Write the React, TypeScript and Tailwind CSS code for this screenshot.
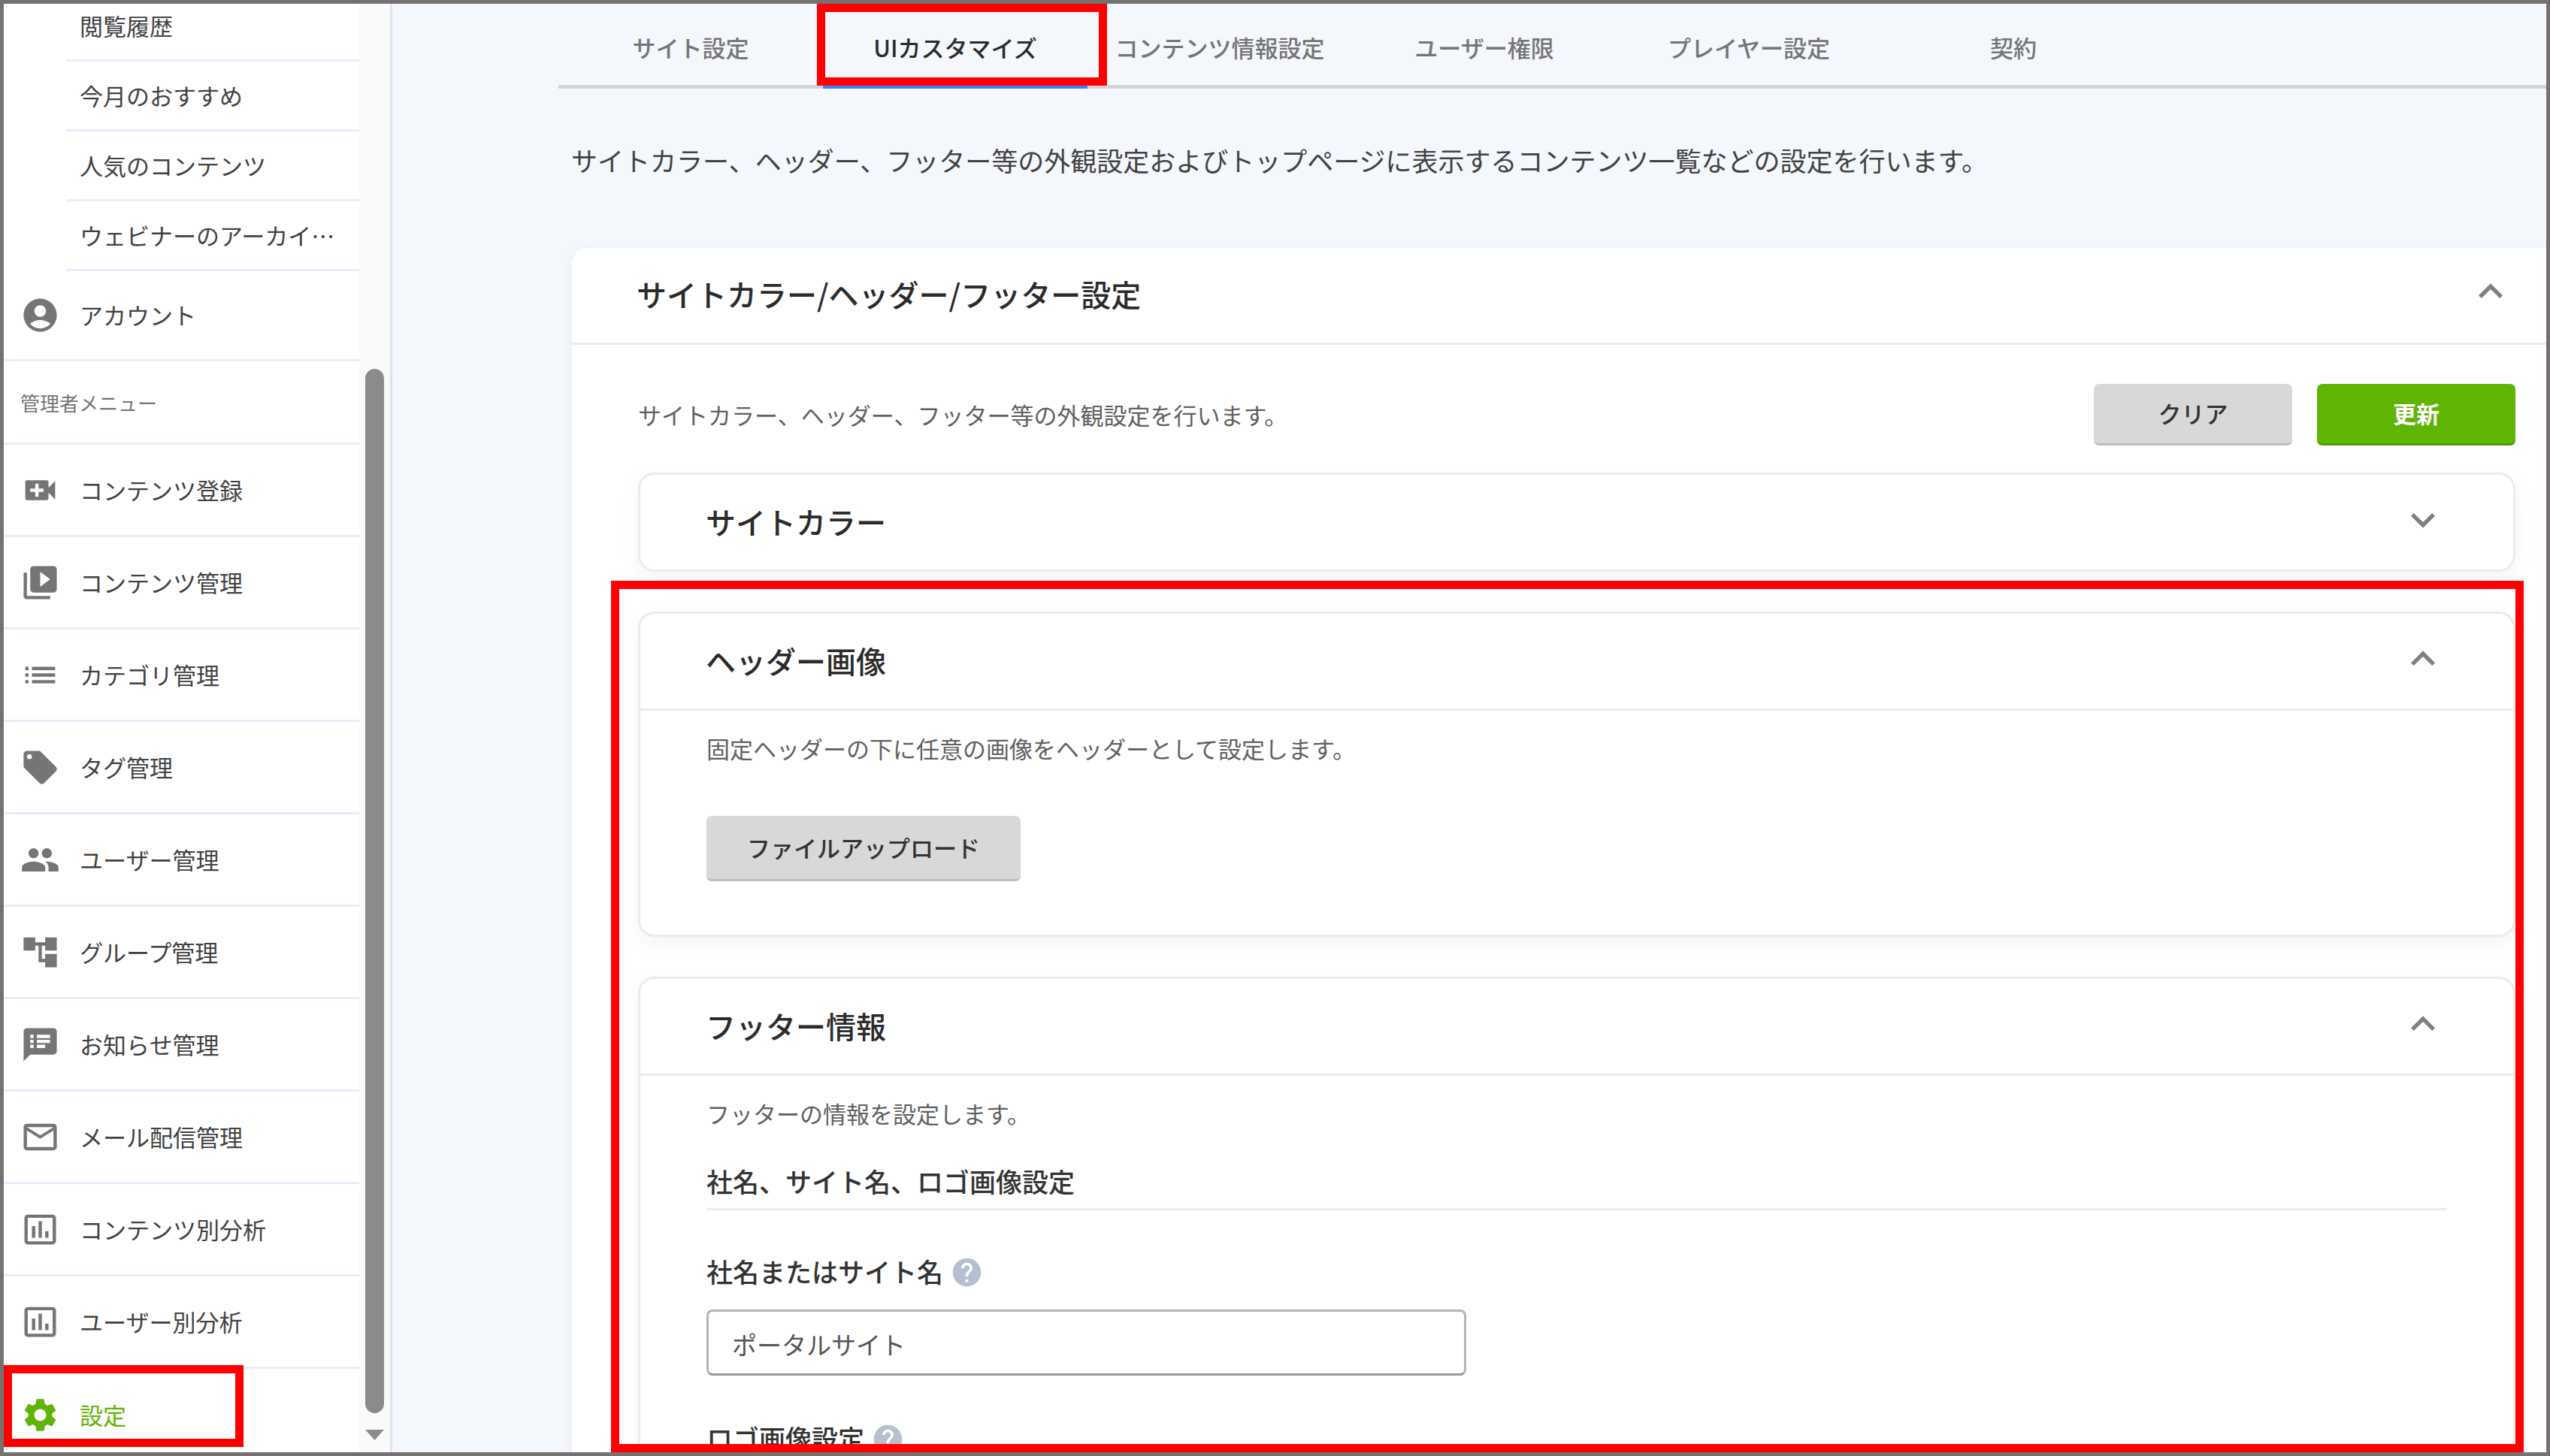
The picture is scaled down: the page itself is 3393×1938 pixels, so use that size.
import { useState } from "react"
import type { ReactNode } from "react"
import {
  MdAccountCircle,
  MdAccountTree,
  MdExpandLess,
  MdExpandMore,
  MdGroup,
  MdHelp,
  MdInsertChartOutlined,
  MdList,
  MdLocalOffer,
  MdMailOutline,
  MdSettings,
  MdSpeakerNotes,
  MdVideoCall,
  MdVideoLibrary,
} from "react-icons/md"

const subItems = ["閲覧履歴", "今月のおすすめ", "人気のコンテンツ", "ウェビナーのアーカイ…"]

const adminItems = [
  { icon: MdVideoCall, label: "コンテンツ登録" },
  { icon: MdVideoLibrary, label: "コンテンツ管理" },
  { icon: MdList, label: "カテゴリ管理" },
  { icon: MdLocalOffer, label: "タグ管理" },
  { icon: MdGroup, label: "ユーザー管理" },
  { icon: MdAccountTree, label: "グループ管理" },
  { icon: MdSpeakerNotes, label: "お知らせ管理" },
  { icon: MdMailOutline, label: "メール配信管理" },
  { icon: MdInsertChartOutlined, label: "コンテンツ別分析" },
  { icon: MdInsertChartOutlined, label: "ユーザー別分析" },
]

const tabs = ["サイト設定", "UIカスタマイズ", "コンテンツ情報設定", "ユーザー権限", "プレイヤー設定", "契約"]

function Sidebar() {
  return (
    <aside className="flex w-[517px] shrink-0 border-r-[3px] border-[#dbe4f2] bg-white">
      <nav className="min-w-0 flex-1 overflow-hidden text-[31px] text-[#424242]">
        <ul className="-mt-4 pl-[83px]">
          {subItems.map((label) => (
            <li key={label} className="border-b-[3px] border-[#e6eefb]">
              <a href="#" className="flex h-[90px] items-center pl-[18px] whitespace-nowrap">
                {label}
              </a>
            </li>
          ))}
        </ul>
        <a href="#" className="flex h-[120px] items-center gap-[26px] border-b-[3px] border-[#e6eefb] pl-[22px]">
          <MdAccountCircle className="size-[53px] text-[#757575]" />
          アカウント
        </a>
        <div className="flex h-[111px] items-center border-b-[3px] border-[#e6eefb] pl-[22px] text-[26px] text-[#757575]">
          管理者メニュー
        </div>
        <ul>
          {adminItems.map((item) => (
            <li key={item.label} className="border-b-[3px] border-[#e6eefb]">
              <a href="#" className="flex h-[120px] items-center gap-[26px] pl-[22px]">
                <item.icon className="size-[53px] text-[#757575]" />
                {item.label}
              </a>
            </li>
          ))}
          <li className="relative">
            <a href="#" className="flex h-[123px] items-center gap-[26px] pl-[22px] text-[#5fb404]">
              <MdSettings className="size-[53px]" />
              設定
            </a>
            <span className="pointer-events-none absolute -top-[5px] left-0 h-[109px] w-[319px] border-[11px] border-[#ff0000]" />
          </li>
        </ul>
      </nav>

      {/* Scrollbar */}
      <div className="flex w-[41px] flex-col items-center bg-[#fafafa] pt-[486px] pb-4">
        <div className="w-[25px] flex-1 rounded-full bg-[#8b8b8b]" />
        <svg viewBox="0 0 25 14" className="mt-[22px] h-[14px] w-[25px] fill-[#8b8b8b]">
          <path d="M0 0h25L12.5 14z" />
        </svg>
      </div>
    </aside>
  )
}

function Panel({ title, defaultOpen, children }: { title: string; defaultOpen?: boolean; children?: ReactNode }) {
  const [open, setOpen] = useState(Boolean(defaultOpen))
  const Chevron = open ? MdExpandLess : MdExpandMore

  return (
    <section className="mb-[53px] rounded-[22px] border-[3px] border-[#ebebeb] bg-white shadow-[0_8px_24px_rgba(90,120,120,0.08)]">
      <h3>
        <button
          type="button"
          aria-expanded={open}
          onClick={() => setOpen(!open)}
          className="flex h-[126px] w-full items-center justify-between pr-[88px] pb-[2px] pl-[87px] text-[40px] font-medium text-[#2b2b2b]"
        >
          {title}
          <Chevron className="mb-1 size-16 text-[#808080]" />
        </button>
      </h3>
      {open && children && <div className="border-t-[3px] border-[#ebebeb] px-[88px] pt-[30px] pb-[71px]">{children}</div>}
    </section>
  )
}

export default function App() {
  return (
    <div
      lang="ja"
      className="flex h-screen overflow-hidden border-[5px] border-[#767171] bg-[#f4f7fc] font-['Noto_Sans_CJK_JP',sans-serif] text-[#424242]"
    >
      <Sidebar />

      <main className="flex min-w-0 flex-1 flex-col">
        {/* Tabs */}
        <div role="tablist" className="ml-[221px] flex h-[113px] shrink-0 shadow-[inset_0_-5px_0_#d5d5d5]">
          {tabs.map((tab, index) => (
            <button
              key={tab}
              type="button"
              role="tab"
              aria-selected={index === 1}
              className={
                index === 1
                  ? "relative w-[352px] border-b-[5px] border-[#3880ff] pt-2 text-[31px] font-medium text-[#2b2b2b]"
                  : "w-[352px] border-b-[5px] border-transparent pt-2 text-[31px] font-medium text-[#757575]"
              }
            >
              {tab}
              {index === 1 && (
                <span className="pointer-events-none absolute top-0 -right-[26px] -bottom-px -left-2 border-[11px] border-[#ff0000]" />
              )}
            </button>
          ))}
        </div>

        <p className="mt-[69px] mb-[91px] ml-[238px] text-[35px] leading-[52px]">
          サイトカラー、ヘッダー、フッター等の外観設定およびトップページに表示するコンテンツ一覧などの設定を行います。
        </p>

        <section className="ml-[239px] flex min-h-0 flex-1 flex-col rounded-tl-[22px] bg-white shadow-[0_4px_16px_rgba(90,120,120,0.08)]">
          <h2 className="shrink-0">
            <button
              type="button"
              aria-expanded="true"
              className="flex h-[129px] w-full items-center justify-between border-b-[3px] border-[#ebebeb] pr-[42px] pb-1 pl-[86px] text-[40px] font-medium text-[#2b2b2b]"
            >
              サイトカラー/ヘッダー/フッター設定
              <MdExpandLess className="mb-[6px] size-16 text-[#808080]" />
            </button>
          </h2>

          <div className="flex min-h-0 flex-1 flex-col pt-[52px] pr-[41px] pl-[88px]">
            <div className="mb-[36px] flex items-center gap-[33px]">
              <p className="flex-1 text-[31px] text-[#616161]">サイトカラー、ヘッダー、フッター等の外観設定を行います。</p>
              <button
                type="button"
                className="h-[82px] w-[264px] rounded-[7px] border-b-[3px] border-[#bdbdbd] bg-[#d8d8d8] text-[31px] font-medium text-[#333333]"
              >
                クリア
              </button>
              <button
                type="button"
                className="h-[82px] w-[264px] rounded-[7px] border-b-[3px] border-[#529c03] bg-[#5fb404] text-[31px] font-bold text-white"
              >
                更新
              </button>
            </div>

            <Panel title="サイトカラー" />

            <div className="relative min-h-0 flex-1">
              <Panel title="ヘッダー画像" defaultOpen>
                <p className="text-[31px] leading-[40px] text-[#616161]">
                  固定ヘッダーの下に任意の画像をヘッダーとして設定します。
                </p>
                <button
                  type="button"
                  className="mt-[70px] block h-[87px] rounded-[7px] border-b-[3px] border-[#bdbdbd] bg-[#d8d8d8] px-[54px] text-[31px] font-medium text-[#333333]"
                >
                  ファイルアップロード
                </button>
              </Panel>

              <Panel title="フッター情報" defaultOpen>
                <p className="text-[31px] leading-[40px] text-[#616161]">フッターの情報を設定します。</p>
                <h4 className="mt-[46px] border-b-[3px] border-[#ebebeb] pb-3 text-[35px] leading-[48px] font-medium text-[#333333]">
                  社名、サイト名、ロゴ画像設定
                </h4>
                <div className="mt-[56px] flex items-center gap-[9px] text-[35px] leading-[48px] font-medium text-[#333333]">
                  <label htmlFor="site-name">社名またはサイト名</label>
                  <MdHelp className="mt-1 size-[45px] text-[#b4bfcf]" />
                </div>
                <input
                  id="site-name"
                  type="text"
                  defaultValue="ポータルサイト"
                  className="mt-[27px] block h-[88px] w-[1011px] rounded-[8px] border-[3px] border-[#b5b5b5] border-b-[#999999] bg-white px-[31px] pt-1 text-[33px] text-[#555555]"
                />
                <div className="mt-[58px] flex items-center gap-[9px] text-[35px] leading-[48px] font-medium text-[#333333]">
                  <span>ロゴ画像設定</span>
                  <MdHelp className="mt-1 size-[45px] text-[#b4bfcf]" />
                </div>
              </Panel>

              <span className="pointer-events-none absolute -top-[41px] -right-[11px] bottom-0 -left-[36px] border-[11px] border-[#ff0000]" />
            </div>
          </div>
        </section>
      </main>
    </div>
  )
}
